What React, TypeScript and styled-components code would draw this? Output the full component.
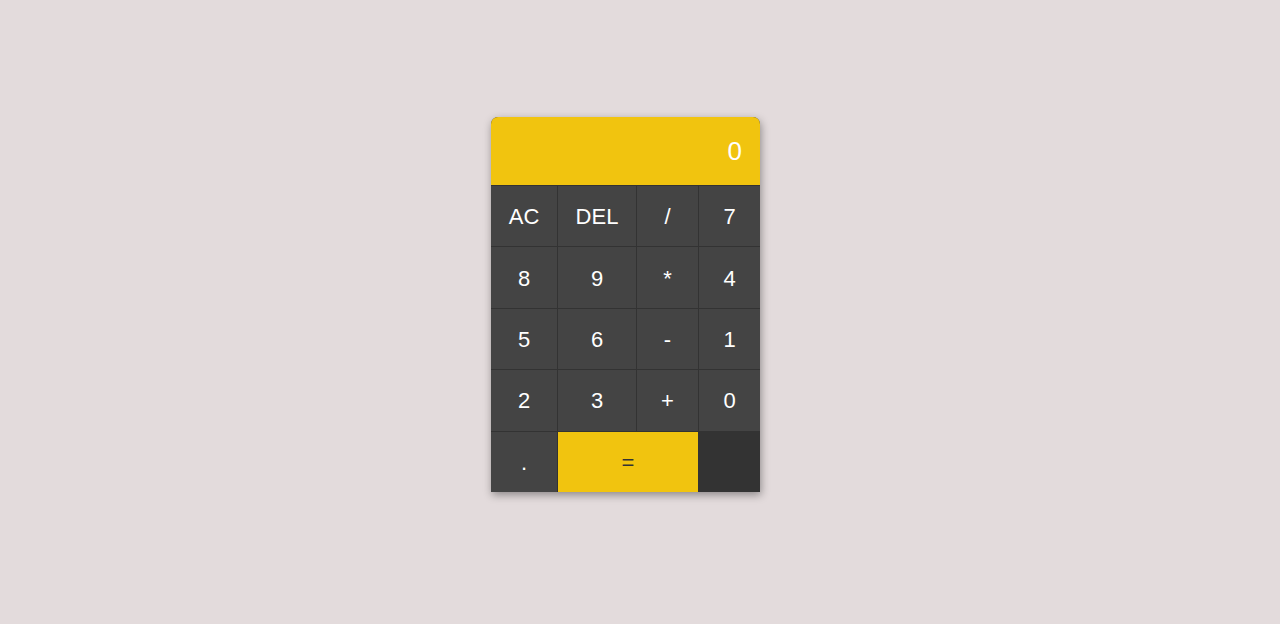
import React from "react";
import styled, { createGlobalStyle } from "styled-components";

const GlobalStyle = createGlobalStyle`
  html, body {
    margin: 0;
    padding: 0;
    background: #e3dbdc;
    font-family: "Liberation Sans", Arial, sans-serif;
  }
`;

const Page = styled.div`
  min-height: 624px;
  box-sizing: border-box;
  display: flex;
  justify-content: center;
  align-items: flex-start;
  padding: 117px 29px 0 0;
`;

const Calculator = styled.div`
  width: 269px;
  display: flex;
  flex-direction: column;
  gap: 1px;
  background: #333333;
  border-radius: 7px 7px 0 0;
  overflow: hidden;
  box-shadow: 1px 3px 8px rgba(0, 0, 0, 0.38);
`;

const Display = styled.div`
  height: 68px;
  background: #f1c40f;
  color: #ffffff;
  font-size: 26px;
  display: flex;
  align-items: center;
  justify-content: flex-end;
  padding: 0 18px 0 0;
  box-sizing: border-box;
`;

const Keys = styled.div`
  display: grid;
  grid-template-columns: 66px 78px 61px 61px;
  grid-template-rows: repeat(5, 1fr);
  gap: 1px;
  height: 306px;
`;

const Key = styled.button<{ $accent?: boolean; $span?: number }>`
  border: none;
  margin: 0;
  padding: 2px 0 0 0;
  font-family: "Liberation Sans", Arial, sans-serif;
  font-size: 22px;
  background: ${(p) => (p.$accent ? "#f1c40f" : "#444444")};
  color: ${(p) => (p.$accent ? "#333333" : "#ffffff")};
  grid-column: ${(p) => (p.$span ? `span ${p.$span}` : "auto")};
  display: flex;
  align-items: center;
  justify-content: center;
  cursor: pointer;
`;

const keys = [
  "AC", "DEL", "/", "7",
  "8", "9", "*", "4",
  "5", "6", "-", "1",
  "2", "3", "+", "0",
  ".",
];

export default function App() {
  return (
    <>
      <GlobalStyle />
      <Page>
        <Calculator>
          <Display>0</Display>
          <Keys>
            {keys.map((k) => (
              <Key key={k}>{k}</Key>
            ))}
            <Key $accent $span={2}>=</Key>
          </Keys>
        </Calculator>
      </Page>
    </>
  );
}
